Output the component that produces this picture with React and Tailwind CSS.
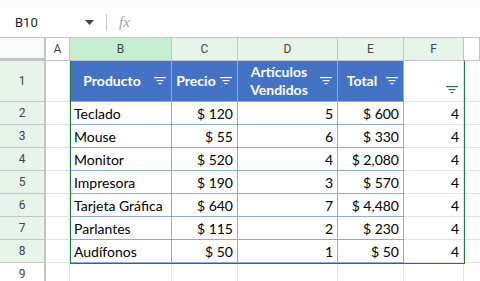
import React from "react";

const rows = [
  ["Teclado", "$ 120", 5, "$ 600"],
  ["Mouse", "$ 55", 6, "$ 330"],
  ["Monitor", "$ 520", 4, "$ 2,080"],
  ["Impresora", "$ 190", 3, "$ 570"],
  ["Tarjeta Gráfica", "$ 640", 7, "$ 4,480"],
  ["Parlantes", "$ 115", 2, "$ 230"],
  ["Audífonos", "$ 50", 1, "$ 50"],
];

const cols = "grid-cols-[46px_24px_102px_66px_100px_66px_60px_1fr]";

function FilterIcon({ color = "#ffffff" }) {
  return (
    <svg width="12" height="8" viewBox="0 0 12 8" className="shrink-0">
      <rect x="0" y="0" width="12" height="1.2" fill={color} />
      <rect x="2.5" y="3" width="7" height="1.2" fill={color} />
      <rect x="4.5" y="6" width="3" height="1.2" fill={color} />
    </svg>
  );
}

function HeaderCell({ children }) {
  return (
    <div className="bg-[#4472c4] border-r border-b border-[#8eaadb] flex items-center pr-[5px]">
      <div className="flex-1 text-center text-white font-bold leading-[18px]">
        {children}
      </div>
      <FilterIcon />
    </div>
  );
}

export default function App() {
  return (
    <div className="w-[480px] h-[281px] overflow-hidden bg-white font-['Lato',sans-serif]">
      {/* formula bar */}
      <div className="h-[8px] bg-[#f9fbfd]" />
      <div className="h-[29px] flex items-center bg-white font-['Roboto',sans-serif] text-[13px] text-[#1f1f1f]">
        <div className="w-[106px] flex items-center pl-[15px] pr-[12px]">
          <span className="flex-1">B10</span>
          <svg width="9" height="5" viewBox="0 0 9 5">
            <path d="M0 0h9L4.5 5z" fill="#444" />
          </svg>
        </div>
        <div className="w-px h-[17px] bg-[#c7c7c7]" />
        <span className="ml-[12px] italic text-[15px] text-[#9aa0a6] font-['Liberation_Serif',serif]">
          fx
        </span>
      </div>

      <div className="relative">
        <div className={`grid ${cols} grid-rows-[24px_41px_repeat(8,23px)] text-[14px] text-black`}>
          {/* column headers */}
          <div className="bg-[#f8f9fa] border-r-2 border-b-[3px] border-t border-[#c4c4c4]" />
          {["A", "B", "C", "D", "E", "F", ""].map((c, i) => (
            <div
              key={i}
              className={`border-r border-b border-t border-[#c4c4c4] flex items-center justify-center text-[12px] text-[#444] font-['Roboto',sans-serif] ${
                c === "B"
                  ? "bg-[#c5eed2]"
                  : c === "A" || c === ""
                  ? "bg-white"
                  : "bg-[#e6f4ea]"
              }`}
            >
              {c}
            </div>
          ))}

          {/* row 1 */}
          <div className="bg-[#e6f4ea] border-r-2 border-b border-[#c4c4c4] flex items-center justify-center text-[12px] text-[#444] font-['Roboto',sans-serif]">
            1
          </div>
          <div className="border-r border-b border-[#e2e3e3]" />
          <HeaderCell>Producto</HeaderCell>
          <HeaderCell>Precio</HeaderCell>
          <HeaderCell>
            Artículos
            <br />
            Vendidos
          </HeaderCell>
          <HeaderCell>Total</HeaderCell>
          <div className="border-r border-b border-[#e2e3e3] flex items-end justify-end pr-[5px] pb-[7px]">
            <FilterIcon color="#188038" />
          </div>
          <div className="border-b border-[#e2e3e3]" />

          {rows.map((r, i) => (
            <React.Fragment key={i}>
              <div className="bg-[#e6f4ea] border-r-2 border-b border-[#c4c4c4] flex items-center justify-center text-[12px] text-[#444] font-['Roboto',sans-serif]">
                {i + 2}
              </div>
              <div className="border-r border-b border-[#e2e3e3]" />
              <div className="border-r border-b border-[#8eaadb] flex items-center pl-[4px]">
                {r[0]}
              </div>
              <div className="border-r border-b border-[#8eaadb] flex items-center justify-end pr-[4px]">
                {r[1]}
              </div>
              <div className="border-r border-b border-[#8eaadb] flex items-center justify-end pr-[4px]">
                {r[2]}
              </div>
              <div className="border-r border-b border-[#8eaadb] flex items-center justify-end pr-[4px]">
                {r[3]}
              </div>
              <div className="border-r border-b border-[#e2e3e3] flex items-center justify-end pr-[4px]">
                4
              </div>
              <div className="border-b border-[#e2e3e3]" />
            </React.Fragment>
          ))}

          {/* row 9 */}
          <div className="bg-white border-r-2 border-b border-[#c4c4c4] flex items-center justify-center text-[12px] text-[#444] font-['Roboto',sans-serif]">
            9
          </div>
          {[0, 1, 2, 3, 4, 5].map((k) => (
            <div key={k} className="border-r border-b border-[#e2e3e3]" />
          ))}
          <div className="border-b border-[#e2e3e3]" />
        </div>

        {/* filter range outline */}
        <div className="absolute left-[70px] top-[24px] w-[395px] h-[203px] border-l border-r border-b border-[#188038] pointer-events-none" />
      </div>
    </div>
  );
}
